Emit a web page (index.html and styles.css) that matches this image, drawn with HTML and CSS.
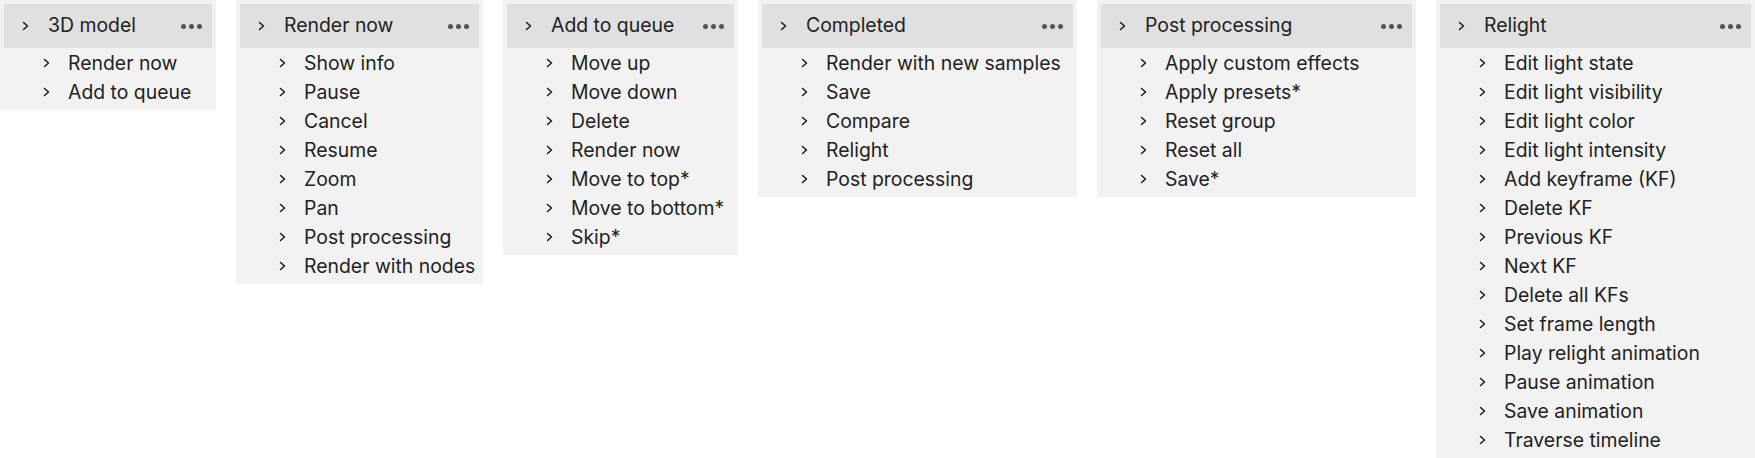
FILE: index.html
```html
<!DOCTYPE html>
<html lang="en">
<head>
<meta charset="utf-8">
<title>Menu tree</title>
<link rel="stylesheet" href="styles.css">
</head>
<body>
<div class="board">
  <section class="panel panel-a">
    <div class="head"><svg class="chev" viewBox="0 0 7 10"><path d="M1.5 1.5 L5.5 5 L1.5 8.5"/></svg><span class="title">3D model</span><span class="dots"><i></i><i></i><i></i></span></div>
    <ul class="items">
      <li><svg class="chev" viewBox="0 0 7 10"><path d="M1.5 1.5 L5.5 5 L1.5 8.5"/></svg><span>Render now</span></li>
      <li><svg class="chev" viewBox="0 0 7 10"><path d="M1.5 1.5 L5.5 5 L1.5 8.5"/></svg><span>Add to queue</span></li>
    </ul>
  </section>
  <section class="panel panel-b">
    <div class="head"><svg class="chev" viewBox="0 0 7 10"><path d="M1.5 1.5 L5.5 5 L1.5 8.5"/></svg><span class="title">Render now</span><span class="dots"><i></i><i></i><i></i></span></div>
    <ul class="items">
      <li><svg class="chev" viewBox="0 0 7 10"><path d="M1.5 1.5 L5.5 5 L1.5 8.5"/></svg><span>Show info</span></li>
      <li><svg class="chev" viewBox="0 0 7 10"><path d="M1.5 1.5 L5.5 5 L1.5 8.5"/></svg><span>Pause</span></li>
      <li><svg class="chev" viewBox="0 0 7 10"><path d="M1.5 1.5 L5.5 5 L1.5 8.5"/></svg><span>Cancel</span></li>
      <li><svg class="chev" viewBox="0 0 7 10"><path d="M1.5 1.5 L5.5 5 L1.5 8.5"/></svg><span>Resume</span></li>
      <li><svg class="chev" viewBox="0 0 7 10"><path d="M1.5 1.5 L5.5 5 L1.5 8.5"/></svg><span>Zoom</span></li>
      <li><svg class="chev" viewBox="0 0 7 10"><path d="M1.5 1.5 L5.5 5 L1.5 8.5"/></svg><span>Pan</span></li>
      <li><svg class="chev" viewBox="0 0 7 10"><path d="M1.5 1.5 L5.5 5 L1.5 8.5"/></svg><span>Post processing</span></li>
      <li><svg class="chev" viewBox="0 0 7 10"><path d="M1.5 1.5 L5.5 5 L1.5 8.5"/></svg><span>Render with nodes</span></li>
    </ul>
  </section>
  <section class="panel panel-c">
    <div class="head"><svg class="chev" viewBox="0 0 7 10"><path d="M1.5 1.5 L5.5 5 L1.5 8.5"/></svg><span class="title">Add to queue</span><span class="dots"><i></i><i></i><i></i></span></div>
    <ul class="items">
      <li><svg class="chev" viewBox="0 0 7 10"><path d="M1.5 1.5 L5.5 5 L1.5 8.5"/></svg><span>Move up</span></li>
      <li><svg class="chev" viewBox="0 0 7 10"><path d="M1.5 1.5 L5.5 5 L1.5 8.5"/></svg><span>Move down</span></li>
      <li><svg class="chev" viewBox="0 0 7 10"><path d="M1.5 1.5 L5.5 5 L1.5 8.5"/></svg><span>Delete</span></li>
      <li><svg class="chev" viewBox="0 0 7 10"><path d="M1.5 1.5 L5.5 5 L1.5 8.5"/></svg><span>Render now</span></li>
      <li><svg class="chev" viewBox="0 0 7 10"><path d="M1.5 1.5 L5.5 5 L1.5 8.5"/></svg><span>Move to top*</span></li>
      <li><svg class="chev" viewBox="0 0 7 10"><path d="M1.5 1.5 L5.5 5 L1.5 8.5"/></svg><span>Move to bottom*</span></li>
      <li><svg class="chev" viewBox="0 0 7 10"><path d="M1.5 1.5 L5.5 5 L1.5 8.5"/></svg><span>Skip*</span></li>
    </ul>
  </section>
  <section class="panel panel-wide">
    <div class="head"><svg class="chev" viewBox="0 0 7 10"><path d="M1.5 1.5 L5.5 5 L1.5 8.5"/></svg><span class="title">Completed</span><span class="dots"><i></i><i></i><i></i></span></div>
    <ul class="items">
      <li><svg class="chev" viewBox="0 0 7 10"><path d="M1.5 1.5 L5.5 5 L1.5 8.5"/></svg><span>Render with new samples</span></li>
      <li><svg class="chev" viewBox="0 0 7 10"><path d="M1.5 1.5 L5.5 5 L1.5 8.5"/></svg><span>Save</span></li>
      <li><svg class="chev" viewBox="0 0 7 10"><path d="M1.5 1.5 L5.5 5 L1.5 8.5"/></svg><span>Compare</span></li>
      <li><svg class="chev" viewBox="0 0 7 10"><path d="M1.5 1.5 L5.5 5 L1.5 8.5"/></svg><span>Relight</span></li>
      <li><svg class="chev" viewBox="0 0 7 10"><path d="M1.5 1.5 L5.5 5 L1.5 8.5"/></svg><span>Post processing</span></li>
    </ul>
  </section>
  <section class="panel panel-wide">
    <div class="head"><svg class="chev" viewBox="0 0 7 10"><path d="M1.5 1.5 L5.5 5 L1.5 8.5"/></svg><span class="title">Post processing</span><span class="dots"><i></i><i></i><i></i></span></div>
    <ul class="items">
      <li><svg class="chev" viewBox="0 0 7 10"><path d="M1.5 1.5 L5.5 5 L1.5 8.5"/></svg><span>Apply custom effects</span></li>
      <li><svg class="chev" viewBox="0 0 7 10"><path d="M1.5 1.5 L5.5 5 L1.5 8.5"/></svg><span>Apply presets*</span></li>
      <li><svg class="chev" viewBox="0 0 7 10"><path d="M1.5 1.5 L5.5 5 L1.5 8.5"/></svg><span>Reset group</span></li>
      <li><svg class="chev" viewBox="0 0 7 10"><path d="M1.5 1.5 L5.5 5 L1.5 8.5"/></svg><span>Reset all</span></li>
      <li><svg class="chev" viewBox="0 0 7 10"><path d="M1.5 1.5 L5.5 5 L1.5 8.5"/></svg><span>Save*</span></li>
    </ul>
  </section>
  <section class="panel panel-wide">
    <div class="head"><svg class="chev" viewBox="0 0 7 10"><path d="M1.5 1.5 L5.5 5 L1.5 8.5"/></svg><span class="title">Relight</span><span class="dots"><i></i><i></i><i></i></span></div>
    <ul class="items">
      <li><svg class="chev" viewBox="0 0 7 10"><path d="M1.5 1.5 L5.5 5 L1.5 8.5"/></svg><span>Edit light state</span></li>
      <li><svg class="chev" viewBox="0 0 7 10"><path d="M1.5 1.5 L5.5 5 L1.5 8.5"/></svg><span>Edit light visibility</span></li>
      <li><svg class="chev" viewBox="0 0 7 10"><path d="M1.5 1.5 L5.5 5 L1.5 8.5"/></svg><span>Edit light color</span></li>
      <li><svg class="chev" viewBox="0 0 7 10"><path d="M1.5 1.5 L5.5 5 L1.5 8.5"/></svg><span>Edit light intensity</span></li>
      <li><svg class="chev" viewBox="0 0 7 10"><path d="M1.5 1.5 L5.5 5 L1.5 8.5"/></svg><span>Add keyframe (KF)</span></li>
      <li><svg class="chev" viewBox="0 0 7 10"><path d="M1.5 1.5 L5.5 5 L1.5 8.5"/></svg><span>Delete KF</span></li>
      <li><svg class="chev" viewBox="0 0 7 10"><path d="M1.5 1.5 L5.5 5 L1.5 8.5"/></svg><span>Previous KF</span></li>
      <li><svg class="chev" viewBox="0 0 7 10"><path d="M1.5 1.5 L5.5 5 L1.5 8.5"/></svg><span>Next KF</span></li>
      <li><svg class="chev" viewBox="0 0 7 10"><path d="M1.5 1.5 L5.5 5 L1.5 8.5"/></svg><span>Delete all KFs</span></li>
      <li><svg class="chev" viewBox="0 0 7 10"><path d="M1.5 1.5 L5.5 5 L1.5 8.5"/></svg><span>Set frame length</span></li>
      <li><svg class="chev" viewBox="0 0 7 10"><path d="M1.5 1.5 L5.5 5 L1.5 8.5"/></svg><span>Play relight animation</span></li>
      <li><svg class="chev" viewBox="0 0 7 10"><path d="M1.5 1.5 L5.5 5 L1.5 8.5"/></svg><span>Pause animation</span></li>
      <li><svg class="chev" viewBox="0 0 7 10"><path d="M1.5 1.5 L5.5 5 L1.5 8.5"/></svg><span>Save animation</span></li>
      <li><svg class="chev" viewBox="0 0 7 10"><path d="M1.5 1.5 L5.5 5 L1.5 8.5"/></svg><span>Traverse timeline</span></li>
    </ul>
  </section>
</div>
</body>
</html>
```

FILE: styles.css
```css
* { box-sizing: border-box; }
html, body { margin: 0; padding: 0; background: #ffffff; }
body {
  font-family: Inter, "Liberation Sans", sans-serif;
  font-size: 19.4px;
  color: #222222;
}
.board {
  display: flex;
  align-items: flex-start;
  gap: 20px;
}
.panel {
  flex: none;
  background: #f2f2f2;
  padding: 4px;
}
.panel-a { width: 216px; }
.panel-b { width: 247px; }
.panel-c { width: 235px; }
.panel-wide { width: 319px; }

.head {
  display: flex;
  align-items: center;
  height: 44px;
  background: #e0e0e0;
  padding: 0 10px 0 18px;
}
.chev {
  flex: none;
  width: 7px;
  height: 10px;
  fill: none;
  stroke: #1a1a1a;
  stroke-width: 1.5;
  stroke-linecap: round;
  stroke-linejoin: round;
}
.head .chev { margin-right: 19px; }
.title {
  flex: 1;
  white-space: nowrap;
  line-height: 1;
}
.dots {
  display: flex;
  gap: 3px;
}
.dots i {
  display: block;
  width: 5px;
  height: 5px;
  border-radius: 50%;
  background: #555;
}
.items {
  list-style: none;
  margin: 0;
  padding: 0;
}
.items li {
  display: flex;
  align-items: center;
  height: 29px;
  padding-left: 39px;
  white-space: nowrap;
}
.items li .chev { margin-right: 18px; }
```
